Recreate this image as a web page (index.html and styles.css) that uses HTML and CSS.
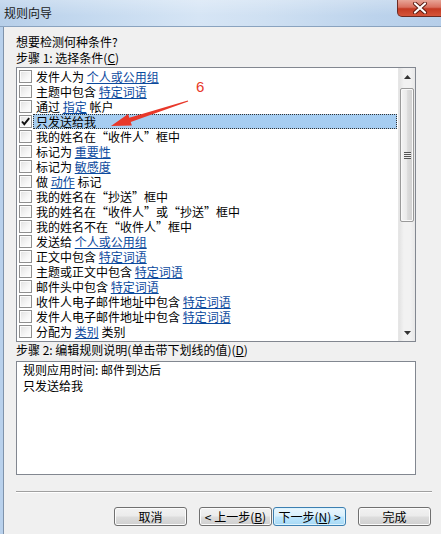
FILE: index.html
```html
<!DOCTYPE html>
<html lang="zh-CN">
<head>
<meta charset="utf-8">
<title>规则向导</title>
<link rel="stylesheet" href="styles.css">
</head>
<body>
<div class="window">
  <div class="titlebar">
    <span class="title">规则向导</span>
    <div class="close">
      <svg width="18" height="12" viewBox="0 0 18 12"><path d="M4 1.5 L14 10.5 M14 1.5 L4 10.5" stroke="#5a1a10" stroke-width="4" stroke-linecap="round"/><path d="M4 1.5 L14 10.5 M14 1.5 L4 10.5" stroke="#fff" stroke-width="2.2" stroke-linecap="round"/></svg>
    </div>
  </div>
  <div class="frame">
    <div class="client">
      <div class="line q">想要检测何种条件?</div>
      <div class="line">步骤 1: 选择条件(<u>C</u>)</div>
      <div class="listbox">
        <div class="list">
          <div class="row"><span class="cb"></span><span class="lbl">发件人为 <a>个人或公用组</a></span></div>
          <div class="row"><span class="cb"></span><span class="lbl">主题中包含 <a>特定词语</a></span></div>
          <div class="row"><span class="cb"></span><span class="lbl">通过 <a>指定</a> 帐户</span></div>
          <div class="row"><span class="cb"><svg width="11" height="11" viewBox="0 0 11 11"><path d="M2 5.5 L4.3 8.2 L9.2 2.2" fill="none" stroke="#111" stroke-width="1.9"/></svg></span><span class="lbl sel">只发送给我</span></div>
          <div class="row"><span class="cb"></span><span class="lbl">我的姓名在“收件人”框中</span></div>
          <div class="row"><span class="cb"></span><span class="lbl">标记为 <a>重要性</a></span></div>
          <div class="row"><span class="cb"></span><span class="lbl">标记为 <a>敏感度</a></span></div>
          <div class="row"><span class="cb"></span><span class="lbl">做 <a>动作</a> 标记</span></div>
          <div class="row"><span class="cb"></span><span class="lbl">我的姓名在“抄送”框中</span></div>
          <div class="row"><span class="cb"></span><span class="lbl">我的姓名在“收件人”或“抄送”框中</span></div>
          <div class="row"><span class="cb"></span><span class="lbl">我的姓名不在“收件人”框中</span></div>
          <div class="row"><span class="cb"></span><span class="lbl">发送给 <a>个人或公用组</a></span></div>
          <div class="row"><span class="cb"></span><span class="lbl">正文中包含 <a>特定词语</a></span></div>
          <div class="row"><span class="cb"></span><span class="lbl">主题或正文中包含 <a>特定词语</a></span></div>
          <div class="row"><span class="cb"></span><span class="lbl">邮件头中包含 <a>特定词语</a></span></div>
          <div class="row"><span class="cb"></span><span class="lbl">收件人电子邮件地址中包含 <a>特定词语</a></span></div>
          <div class="row"><span class="cb"></span><span class="lbl">发件人电子邮件地址中包含 <a>特定词语</a></span></div>
          <div class="row"><span class="cb"></span><span class="lbl">分配为 <a>类别</a> 类别</span></div>
        </div>
        <div class="scrollbar">
          <div class="sbtn"><svg width="7" height="4" viewBox="0 0 7 4"><path d="M0 4 L3.5 0 L7 4Z" fill="#333"/></svg></div>
          <div class="track">
            <div class="thumb"><span class="grip"></span></div>
          </div>
          <div class="sbtn"><svg width="7" height="4" viewBox="0 0 7 4"><path d="M0 0 L3.5 4 L7 0Z" fill="#333"/></svg></div>
        </div>
      </div>
      <div class="line">步骤 2: 编辑规则说明(单击带下划线的值)(<u>D</u>)</div>
      <div class="desc">
        <div>规则应用时间: 邮件到达后</div>
        <div>只发送给我</div>
      </div>
      <div class="sep"></div>
      <div class="buttons">
        <button class="btn">取消</button>
        <button class="btn prev">&lt; 上一步(<u>B</u>)</button>
        <button class="btn def">下一步(<u>N</u>) &gt;</button>
        <button class="btn fin">完成</button>
      </div>
    </div>
  </div>
  <svg class="annot" width="441" height="534" viewBox="0 0 441 534">
    <path d="M111 126 L131.9 125.5 L130.7 121.9 L188.2 101.6 L187.8 100.4 L129.3 117.7 L128.1 114.1 Z" fill="#e8382a"/>
    <text x="196" y="92" font-family="Liberation Sans, sans-serif" font-size="15" fill="#e8382a">6</text>
  </svg>
</div>
</body>
</html>
```

FILE: styles.css
```css
* { box-sizing: border-box; }
html, body { margin: 0; padding: 0; }
body {
  width: 441px;
  height: 534px;
  overflow: hidden;
  font-family: "Noto Sans CJK SC", "Liberation Sans", sans-serif;
  font-size: 12px;
  color: #000;
  background: #f0f0f0;
}
.window {
  position: relative;
  width: 441px;
  height: 534px;
  display: flex;
  flex-direction: column;
}
.titlebar {
  height: 27px;
  flex: none;
  display: flex;
  align-items: flex-start;
  justify-content: space-between;
  background:
    linear-gradient(180deg, rgba(255,255,255,0.25) 0%, rgba(255,255,255,0) 60%),
    linear-gradient(90deg, #b7cfe9 0%, #c4d9ef 20%, #d6e5f5 45%, #cfe0f2 60%, #bcd3ec 85%, #b6cee9 100%);
  border-bottom: 1px solid #8aa3bf;
}
.title {
  margin-left: 4px;
  line-height: 26px;
  color: #1a1a1a;
}
.close {
  width: 45px;
  height: 17px;
  margin-right: -1px;
  border: 1px solid #6b2a22;
  border-top: none;
  border-radius: 0 0 0 5px;
  background: linear-gradient(180deg, #e8a597 0%, #d9705f 45%, #c43a23 55%, #d5553a 100%);
  display: flex;
  align-items: center;
  justify-content: center;
}
.frame {
  flex: 1;
  display: flex;
  background: linear-gradient(90deg, #b9d1ec 0, #b9d1ec 3px, #7f93ab 3px, #7f93ab 4px, transparent 4px);
  padding-left: 4px;
}
.client {
  flex: 1;
  background: #f0f0f0;
  padding-left: 12px;
  display: flex;
  flex-direction: column;
}
.line {
  line-height: 16px;
  height: 16px;
  white-space: nowrap;
}
.q { margin-top: 7px; }
u { text-decoration: underline; }
.listbox {
  margin-top: 1px;
  width: 400px;
  height: 275px;
  border: 1px solid #828790;
  background: #fff;
  display: flex;
}
.list {
  flex: 1;
  padding-top: 1px;
  overflow: hidden;
}
.row {
  height: 15px;
  display: flex;
  align-items: center;
  padding-left: 2px;
  white-space: nowrap;
}
.cb {
  width: 13px;
  height: 13px;
  flex: none;
  border: 1px solid #8f8f8f;
  background: linear-gradient(135deg, #e0e0e0 0%, #f6f6f6 60%, #ffffff 100%);
  box-shadow: inset 0 0 0 1px #fbfbfb;
  display: flex;
  align-items: center;
  justify-content: center;
  margin-right: 1px;
}
.lbl {
  flex: 1;
  height: 15px;
  line-height: 15px;
  padding-left: 3px;
  margin-right: 1px;
}
.lbl.sel {
  background: #a6cdf1;
  outline: 1px dotted #333;
  outline-offset: -1px;
}
a {
  color: #0b4a9e;
  text-decoration: underline;
}
.scrollbar {
  width: 17px;
  flex: none;
  display: flex;
  flex-direction: column;
  background: linear-gradient(90deg, #e3e3e3 0%, #f2f2f2 30%, #f2f2f2 70%, #e8e8e8 100%);
  border-left: 1px solid #e6e6e6;
}
.sbtn {
  height: 17px;
  flex: none;
  display: flex;
  align-items: center;
  justify-content: center;
}
.track {
  flex: 1;
  padding-top: 3px;
}
.thumb {
  margin: 0 1px;
  height: 134px;
  border: 1px solid #9a9a9a;
  border-radius: 2px;
  background: linear-gradient(90deg, #f4f4f4 0%, #ebebeb 45%, #dcdcdc 55%, #cfcfcf 100%);
  box-shadow: inset 0 0 0 1px #f9f9f9;
  display: flex;
  align-items: center;
  justify-content: center;
}
.grip {
  width: 7px;
  height: 7px;
  background: repeating-linear-gradient(180deg, #555 0, #555 1px, #eee 1px, #eee 2px);
}
.desc {
  margin-top: 3px;
  width: 400px;
  height: 114px;
  border: 1px solid #828790;
  background: #fff;
  padding-left: 6px;
  line-height: 16px;
}
.sep {
  margin-top: 16px;
  width: 416px;
  height: 2px;
  border-top: 1px solid #a0a0a0;
  border-bottom: 1px solid #fff;
}
.buttons {
  margin-top: 14px;
  width: 415px;
  display: flex;
  justify-content: flex-end;
}
.btn {
  width: 73px;
  height: 19px;
  padding: 0;
  font-family: "Noto Sans CJK SC", "Liberation Sans", sans-serif;
  font-size: 12px;
  line-height: 17px;
  color: #000;
  border: 1px solid #707070;
  border-radius: 3px;
  background: linear-gradient(180deg, #f2f2f2 0%, #ebebeb 48%, #dddddd 52%, #cfcfcf 100%);
  box-shadow: inset 0 0 0 1px #fcfcfc;
}
.prev { margin-left: 12px; }
.def {
  margin-left: 1px;
  border-color: #3c7fb1;
  background: linear-gradient(180deg, #eaf6fd 0%, #d9f0fc 48%, #bee6fd 52%, #a7d9f5 100%);
  box-shadow: inset 0 0 0 1px #ddf3fd;
}
.fin { margin-left: 12px; }
.annot {
  position: absolute;
  left: 0;
  top: 0;
  pointer-events: none;
}
```
